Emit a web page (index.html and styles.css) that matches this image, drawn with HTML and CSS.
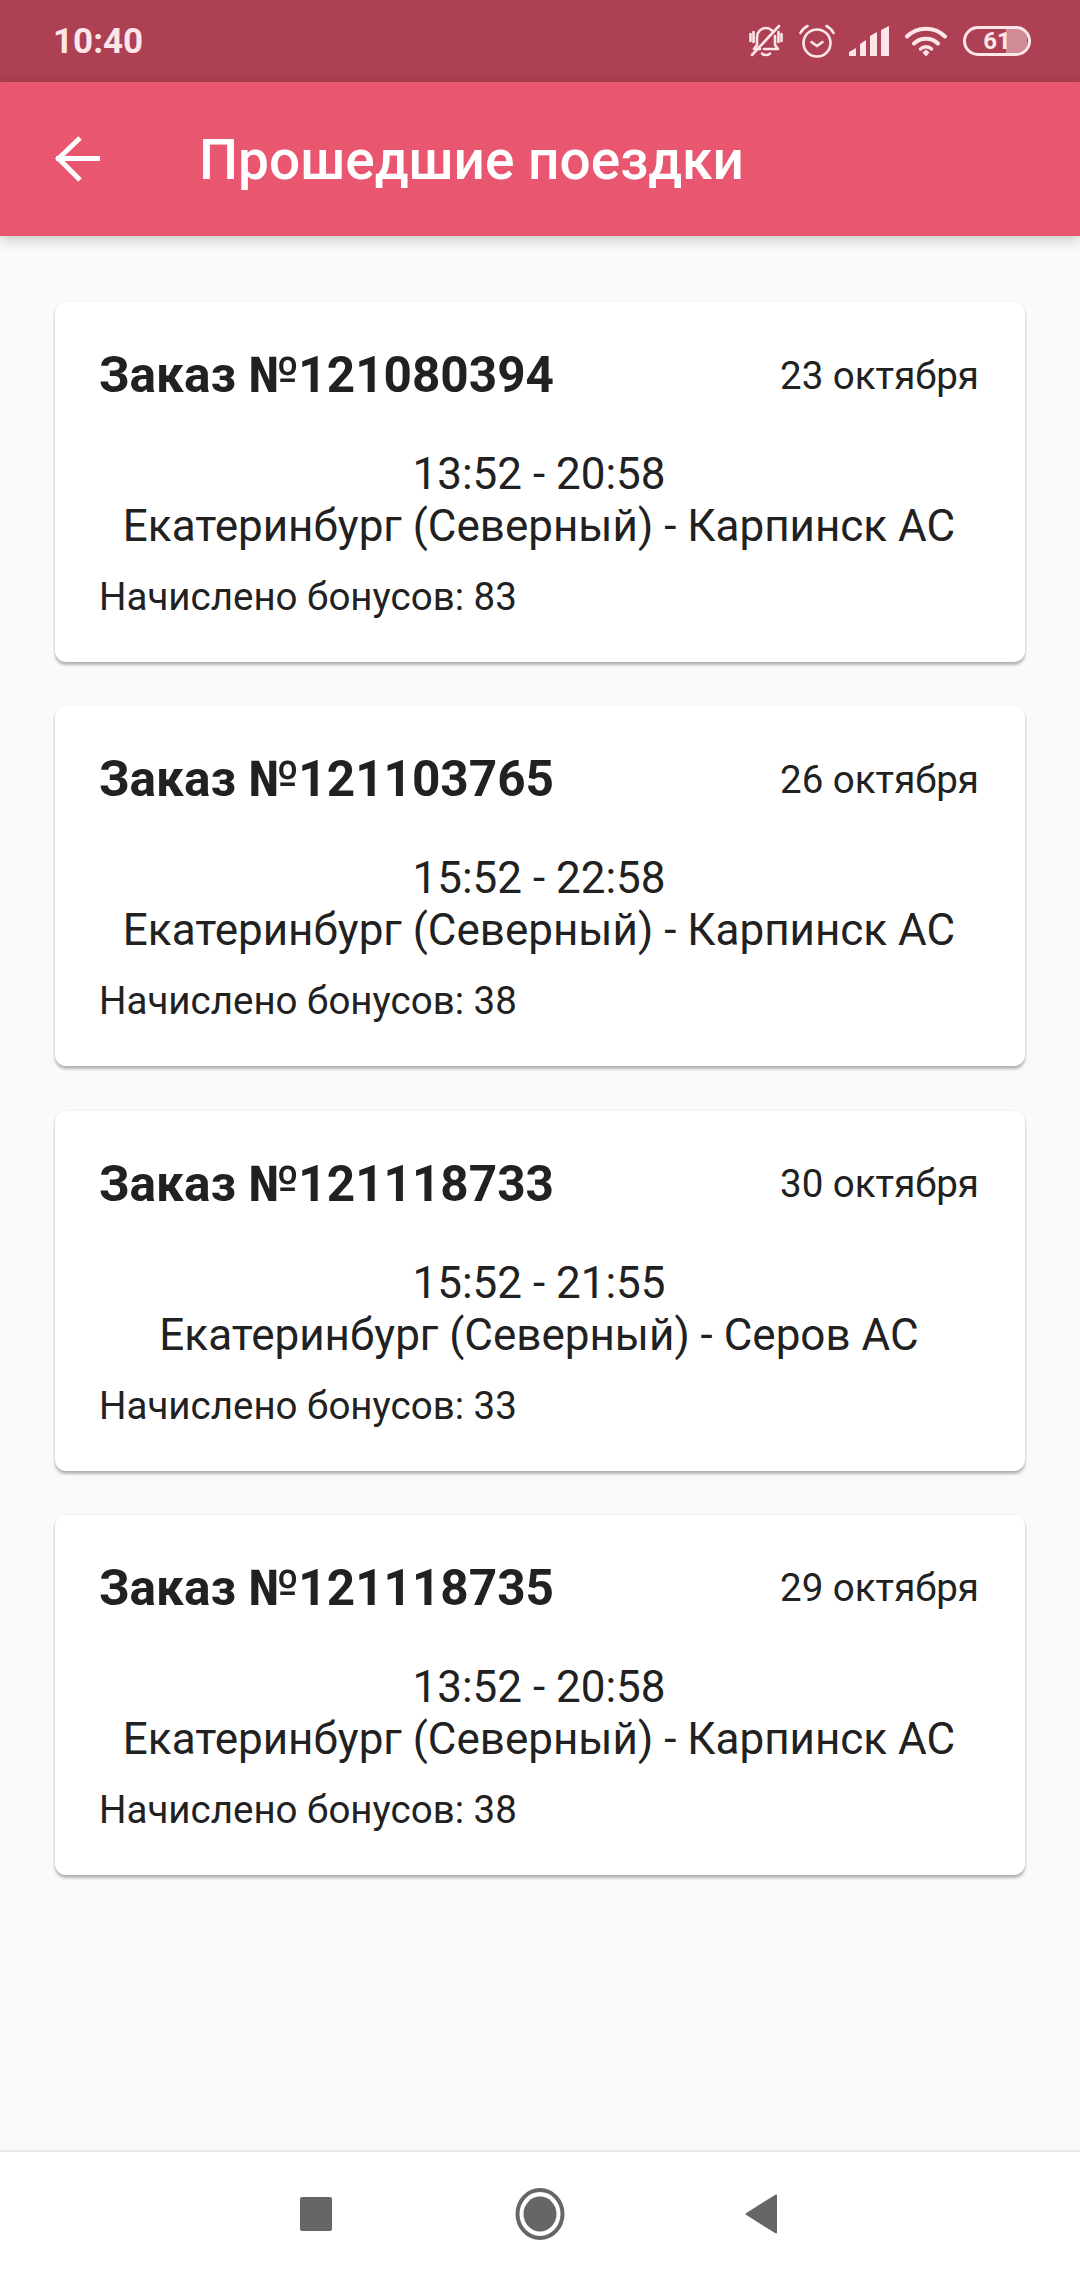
FILE: index.html
```html
<!DOCTYPE html>
<html>
    <head>
        <title>Прошедшие поездки</title>
        <link rel="stylesheet" href="styles.css">
    </head>
    <body>
        <div class="status-bar">
            <span class="clock">10:40</span>
            <div class="status-icons">
                <svg class="ic-bell" width="34" height="34" viewBox="0 0 34 34" fill="none" stroke="#fde6e9" stroke-width="2.6" stroke-linecap="round" stroke-linejoin="round">
                    <path d="M11 25H5l3-4v-8c0-5 4-9 9-9 2.500 0 4.500 1 6 2.500"/>
                    <path d="M26 12v9l3 4H15"/>
                    <path d="M13 29.500c1.500 2 6.500 2 8 0"/>
                    <path d="M3 31 30 2"/>
                    <path d="M1.500 10v7M4.500 8v10M29.500 8v10M32.500 10v7"/>
                </svg>
                <svg class="ic-alarm" width="36" height="34" viewBox="0 0 36 34" fill="none" stroke="#fde6e9" stroke-width="2.6" stroke-linecap="round" stroke-linejoin="round">
                    <circle cx="18" cy="19" r="13.500"/>
                    <path d="M12.500 18l5.500 4 5.500-4"/>
                    <path d="M1.500 9C3 6 5.500 3.500 8.500 2M34.500 9C33 6 30.500 3.500 27.500 2"/>
                </svg>
                <svg class="ic-signal" width="40" height="30" viewBox="0 0 40 30" fill="#fde6e9">
                    <path d="M0 30v-4l7-4v8zM11 30V18l6-4v16zM21 30V10l7-4v24zM32 30V4l8-4v30z"/>
                </svg>
                <svg class="ic-wifi" width="42" height="31" viewBox="0 0 42 31" fill="none" stroke="#fde6e9" stroke-width="4" stroke-linecap="round">
                    <path d="M2 10.500C12.500 0 29.500 0 40 10.500"/>
                    <path d="M9 17.500c6.500-6.500 17.500-6.500 24 0"/>
                    <path d="M15.500 23c3-3 8-3 11 0" stroke-width="3.400"/>
                    <path d="M17.500 26.500l3.500-3 3.500 3-3.500 4z" fill="#fde6e9" stroke="none"/>
                </svg>
                <div class="battery">
                    <div class="battery-level"></div>
                    <span class="battery-text">61</span>
                </div>
            </div>
        </div>

        <div class="app-bar">
            <svg class="back" width="46" height="46" viewBox="0 0 46 46" fill="none" stroke="#fff" stroke-width="5">
                <path d="M1 22.500h44"/>
                <path d="M25 2 3.500 22.500 25 44"/>
            </svg>
            <h1>Прошедшие поездки</h1>
        </div>

        <div class="list">
            <div class="card">
                <div class="card-head">
                    <span class="order">Заказ №121080394</span>
                    <span class="date">23 октября</span>
                </div>
                <div class="route">
                    <div>13:52 - 20:58</div>
                    <div>Екатеринбург (Северный) - Карпинск АС</div>
                </div>
                <div class="bonus">Начислено бонусов: 83</div>
            </div>
            <div class="card">
                <div class="card-head">
                    <span class="order">Заказ №121103765</span>
                    <span class="date">26 октября</span>
                </div>
                <div class="route">
                    <div>15:52 - 22:58</div>
                    <div>Екатеринбург (Северный) - Карпинск АС</div>
                </div>
                <div class="bonus">Начислено бонусов: 38</div>
            </div>
            <div class="card">
                <div class="card-head">
                    <span class="order">Заказ №121118733</span>
                    <span class="date">30 октября</span>
                </div>
                <div class="route">
                    <div>15:52 - 21:55</div>
                    <div>Екатеринбург (Северный) - Серов АС</div>
                </div>
                <div class="bonus">Начислено бонусов: 33</div>
            </div>
            <div class="card">
                <div class="card-head">
                    <span class="order">Заказ №121118735</span>
                    <span class="date">29 октября</span>
                </div>
                <div class="route">
                    <div>13:52 - 20:58</div>
                    <div>Екатеринбург (Северный) - Карпинск АС</div>
                </div>
                <div class="bonus">Начислено бонусов: 38</div>
            </div>
        </div>

        <div class="nav-bar">
            <svg width="32" height="34" viewBox="0 0 32 34" fill="#666"><rect width="32" height="34" rx="2"/></svg>
            <svg width="50" height="52" viewBox="0 0 50 52" fill="none"><ellipse cx="25" cy="26" rx="22.500" ry="24" stroke="#666" stroke-width="4"/><ellipse cx="25" cy="26" rx="16.500" ry="17.500" fill="#666"/></svg>
            <svg width="32" height="40" viewBox="0 0 32 40" fill="#666" stroke="#666" stroke-width="2" stroke-linejoin="round"><path d="M1.500 20 31 1.500v37z"/></svg>
        </div>
    </body>
</html>
```

FILE: styles.css
```css
* { box-sizing: border-box; }
html, body { margin: 0; height: 100%; }
body { width: 1080px; height: 2280px; background: #fafafa; font-family: Roboto, "Noto Sans", sans-serif; color: #212121; display: flex; flex-direction: column; overflow: hidden; }

.status-bar { height: 82px; background: #ad4052; display: flex; align-items: center; justify-content: space-between; padding: 0 49px 0 53px; color: #fde6e9; }
.clock { font-size: 35px; font-weight: 700; }
.status-icons { display: flex; align-items: center; }
.ic-bell { margin-right: 16px; }
.ic-alarm { margin-right: 14px; }
.ic-signal { margin-right: 16px; }
.ic-wifi { margin-right: 16px; }
.battery { position: relative; width: 68px; height: 30px; border: 3px solid #fde6e9; border-radius: 15px; overflow: hidden; }
.battery-level { position: absolute; left: 0; top: 0; bottom: 0; width: 61px; background: rgba(253, 230, 233, 0.45); clip-path: inset(0 0 0 40px); }
.battery-text { position: absolute; left: 0; right: 0; top: 0; bottom: 0; display: flex; align-items: center; justify-content: center; font-size: 24px; font-weight: 700; }

.app-bar { height: 154px; background: #e8566f; display: flex; align-items: center; padding-left: 55px; box-shadow: 0 4px 12px rgba(0, 0, 0, 0.2); position: relative; }
.back { margin-right: 98px; flex: none; }
.app-bar h1 { margin: 2px 0 0; font-size: 55px; font-weight: 500; color: #fff; }

.list { flex: 1; padding: 66px 55px 0; }
.card { height: 360px; background: #fff; border-radius: 11px; margin-bottom: 44.33px; padding: 0 46px 0 44px; box-shadow: 0 3px 3px rgba(0, 0, 0, 0.28), 0 0 2px rgba(0, 0, 0, 0.08); }
.card-head { display: flex; align-items: center; justify-content: space-between; padding-top: 40px; height: 106px; }
.order { font-size: 49.5px; font-weight: 700; }
.date { font-size: 38.5px; }
.route { font-size: 44px; line-height: 52px; text-align: center; margin-top: 40px; }
.bonus { font-size: 38.5px; margin-top: 22px; }

.nav-bar { height: 130px; background: #fff; border-top: 2px solid #e8e8e8; display: flex; align-items: center; padding-left: 300px; padding-bottom: 4px; }
.nav-bar svg:nth-child(1) { margin-right: 183px; }
.nav-bar svg:nth-child(2) { margin-right: 180px; }
```
